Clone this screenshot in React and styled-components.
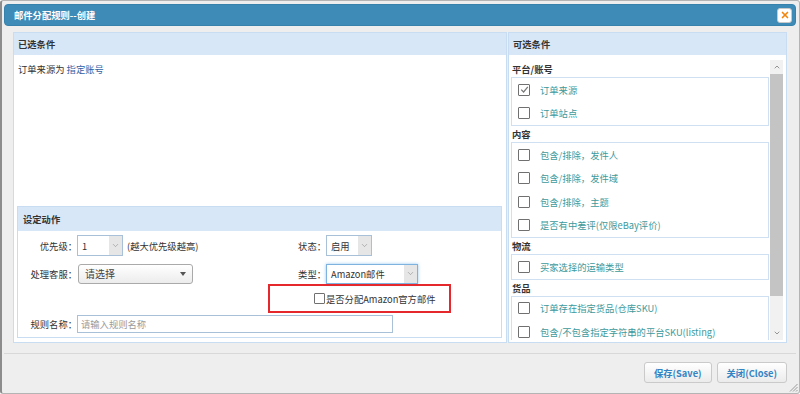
import React from "react";
import styled, { createGlobalStyle } from "styled-components";
import { X, ChevronDown, ChevronUp } from "lucide-react";

const GlobalStyle = createGlobalStyle`
  html, body { margin: 0; padding: 0; background: #fff; }
  body {
    font-family: "Noto Sans CJK SC", "Noto Sans", sans-serif;
    font-size: 9.3px;
    color: #333;
  }
  * { box-sizing: border-box; }
`;

const Dialog = styled.div`
  position: relative;
  width: 800px;
  height: 394px;
  border: 1px solid #b4b4b4;
  border-left: 2px solid #8c8c8c;
  border-radius: 3px;
  background: #eeeeee;
  padding: 3px 3px 0 2px;
  display: flex;
  flex-direction: column;
`;

const TitleBar = styled.div`
  height: 22px;
  flex: none;
  background: #3f8bb8;
  border: 1px solid #3781ad;
  border-radius: 4px;
  display: flex;
  align-items: center;
  justify-content: space-between;
  padding: 0 3px 0 9px;
  color: #fff;
  font-weight: bold;
`;

const CloseButton = styled.div`
  width: 15px;
  height: 15px;
  background: #fff;
  border: 1px solid #c9c9c9;
  border-radius: 3px;
  display: flex;
  align-items: center;
  justify-content: center;
`;

const Content = styled.div`
  margin: 6px 9px 0 9px;
  height: 311px;
  flex: none;
  display: flex;
  gap: 1px;
`;

const Panel = styled.div`
  width: ${(p) => (p.$w ? `${p.$w}px` : "auto")};
  flex: ${(p) => (p.$w ? "none" : "1")};
  border: 1px solid #c9ddf2;
  background: #fff;
  display: flex;
  flex-direction: column;
  min-width: 0;
`;

const PanelHeader = styled.div`
  height: ${(p) => p.$h || 22}px;
  flex: none;
  background: #d8e7f7;
  display: flex;
  align-items: center;
  padding-left: ${(p) => p.$pl || 4}px;
  font-weight: bold;
  color: #333;
`;

const SelectedText = styled.div`
  padding: 7px 4px 0;
  line-height: 14px;
`;

const LinkText = styled.span`
  color: #2d62a6;
`;

const ActionBox = styled.div`
  margin: auto 4px 4px 3px;
  border: 1px solid #c9ddf2;
  display: flex;
  flex-direction: column;
`;

const ActionBody = styled.div`
  padding: 4px 0 4px;
  display: flex;
  flex-direction: column;
`;

const FormRow = styled.div`
  display: flex;
  align-items: center;
  height: ${(p) => p.$h}px;
  margin-top: ${(p) => p.$mt || 0}px;
`;

const Field = styled.div`
  display: flex;
  align-items: center;
  width: ${(p) => (p.$w ? `${p.$w}px` : "auto")};
  flex: none;
`;

const Label = styled.div`
  width: ${(p) => p.$w}px;
  text-align: right;
  white-space: nowrap;
  color: #333;
`;

const Select = styled.div`
  width: ${(p) => p.$w}px;
  height: ${(p) => p.$h || 21}px;
  display: flex;
  align-items: stretch;
  background: #fff;
  border: 1px solid ${(p) => (p.$focus ? "#7fb3df" : "#a9c0d9")};
  box-shadow: ${(p) => (p.$focus ? "0 0 3px rgba(102,175,233,0.7)" : "none")};
`;

const SelectValue = styled.div`
  flex: 1;
  display: flex;
  align-items: center;
  padding-left: 4px;
  color: #333;
  white-space: nowrap;
`;

const SelectArrow = styled.div`
  width: 13px;
  background: #e6e6e6;
  display: flex;
  align-items: center;
  justify-content: center;
`;

const Combo = styled.div`
  margin-left: 1px;
  width: 115px;
  height: 20px;
  border: 1px solid #aaaaaa;
  border-radius: 3px;
  background: linear-gradient(#ffffff, #ececec);
  display: flex;
  align-items: center;
  justify-content: space-between;
  padding: 0 6px 0 6px;
  color: #444;
  font-size: 10px;
`;

const Caret = styled.span`
  width: 0;
  height: 0;
  border-left: 3px solid transparent;
  border-right: 3px solid transparent;
  border-top: 4px solid #555;
`;

const Hint = styled.span`
  margin-left: 4px;
  white-space: nowrap;
`;

const RedBox = styled.div`
  margin-left: 250px;
  width: 183px;
  height: 29px;
  border: 2px solid #e5282b;
  display: flex;
  align-items: center;
  padding-left: 44px;
  gap: 1px;
  white-space: nowrap;
`;

const Box = styled.span`
  width: ${(p) => p.$s || 12}px;
  height: ${(p) => p.$s || 12}px;
  flex: none;
  border: 1px solid #707070;
  background: #fff;
  border-radius: 1px;
  display: inline-flex;
  align-items: center;
  justify-content: center;
`;

const TextInput = styled.input`
  width: 316px;
  height: 18px;
  border: 1px solid #a9c0d9;
  padding: 0 3px;
  font-family: inherit;
  font-size: 9.3px;
  color: #333;
  outline: none;
  &::placeholder { color: #9a9a9a; }
`;

const ScrollWrap = styled.div`
  margin-top: 5px;
  height: 280px;
  display: flex;
`;

const List = styled.div`
  flex: 1;
  overflow: hidden;
  padding: 1px 0 0 2px;
  min-width: 0;
`;

const GroupHeading = styled.div`
  height: 16px;
  display: flex;
  align-items: center;
  padding-left: 1px;
  font-weight: bold;
  color: #333;
`;

const GroupBox = styled.div`
  border: 1px solid #cfe0f3;
`;

const Item = styled.div`
  height: 23.5px;
  display: flex;
  align-items: center;
  padding-left: 6px;
`;

const ItemText = styled.span`
  margin-left: 10px;
  color: #3d9a9c;
  white-space: nowrap;
`;

const Scrollbar = styled.div`
  width: 13px;
  margin: 0 3px 0 1px;
  background: #f1f1f1;
  display: flex;
  flex-direction: column;
`;

const ScrollBtn = styled.div`
  height: 14px;
  flex: none;
  display: flex;
  align-items: center;
  justify-content: center;
`;

const Thumb = styled.div`
  height: 222px;
  flex: none;
  background: #c4c4c4;
`;

const Track = styled.div`
  flex: 1;
`;

const Footer = styled.div`
  margin-top: 10px;
  border-top: 1px solid #d8d8d8;
  display: flex;
  justify-content: flex-end;
  gap: 5px;
  padding: 8px 9px 0 0;
`;

const Button = styled.div`
  height: 21px;
  padding: 0 ${(p) => p.$px || 9}px;
  border: 1px solid #cacaca;
  border-radius: 3px;
  background: linear-gradient(#ffffff, #ebebeb);
  color: #3484c4;
  font-weight: bold;
  display: flex;
  align-items: center;
  white-space: nowrap;
`;

const Grip = styled.svg`
  position: absolute;
  right: 1px;
  bottom: 1px;
`;

const Check = () => (
  <svg width="9" height="9" viewBox="0 0 9 9">
    <polyline points="1.2,4.6 3.6,7 7.8,1.8" fill="none" stroke="#777" strokeWidth="1.2" />
  </svg>
);

const groups = [
  { title: "平台/账号", items: [{ t: "订单来源", c: true }, { t: "订单站点" }] },
  {
    title: "内容",
    items: [
      { t: "包含/排除，发件人" },
      { t: "包含/排除，发件域" },
      { t: "包含/排除，主题" },
      { t: "是否有中差评(仅限eBay评价)" },
    ],
  },
  { title: "物流", items: [{ t: "买家选择的运输类型" }] },
  {
    title: "货品",
    items: [
      { t: "订单存在指定货品(仓库SKU)" },
      { t: "包含/不包含指定字符串的平台SKU(listing)" },
    ],
  },
];

const Arrow = () => (
  <SelectArrow>
    <ChevronDown size={9} strokeWidth={1.4} color="#808080" />
  </SelectArrow>
);

export default function App() {
  return (
    <>
      <GlobalStyle />
      <Dialog>
        <TitleBar>
          <span>邮件分配规则--创建</span>
          <CloseButton>
            <X size={10} strokeWidth={4} color="#f0870f" />
          </CloseButton>
        </TitleBar>

        <Content>
          <Panel $w={494}>
            <PanelHeader>已选条件</PanelHeader>
            <SelectedText>
              订单来源为 <LinkText>指定账号</LinkText>
            </SelectedText>

            <ActionBox>
              <PanelHeader $h={24} $pl={5}>设定动作</PanelHeader>
              <ActionBody>
                <FormRow $h={21} $mt={0}>
                  <Field $w={250}>
                    <Label $w={59}>优先级：</Label>
                    <Select $w={46}>
                      <SelectValue>1</SelectValue>
                      <Arrow />
                    </Select>
                    <Hint>(越大优先级越高)</Hint>
                  </Field>
                  <Field>
                    <Label $w={58}>状态：</Label>
                    <Select $w={46}>
                      <SelectValue>启用</SelectValue>
                      <Arrow />
                    </Select>
                  </Field>
                </FormRow>

                <FormRow $h={21} $mt={7}>
                  <Field $w={250}>
                    <Label $w={59}>处理客服：</Label>
                    <Combo>
                      <span>请选择</span>
                      <Caret />
                    </Combo>
                  </Field>
                  <Field>
                    <Label $w={58}>类型：</Label>
                    <Select $w={92} $h={20} $focus>
                      <SelectValue>Amazon邮件</SelectValue>
                      <Arrow />
                    </Select>
                  </Field>
                </FormRow>

                <FormRow $h={29}>
                  <RedBox>
                    <Box $s={11} />
                    <span>是否分配Amazon官方邮件</span>
                  </RedBox>
                </FormRow>

                <FormRow $h={18} $mt={2}>
                  <Field>
                    <Label $w={59}>规则名称：</Label>
                    <TextInput placeholder="请输入规则名称" />
                  </Field>
                </FormRow>
              </ActionBody>
            </ActionBox>
          </Panel>

          <Panel>
            <PanelHeader>可选条件</PanelHeader>
            <ScrollWrap>
              <List>
                {groups.map((g) => (
                  <React.Fragment key={g.title}>
                    <GroupHeading>{g.title}</GroupHeading>
                    <GroupBox>
                      {g.items.map((it) => (
                        <Item key={it.t}>
                          <Box>{it.c && <Check />}</Box>
                          <ItemText>{it.t}</ItemText>
                        </Item>
                      ))}
                    </GroupBox>
                  </React.Fragment>
                ))}
              </List>
              <Scrollbar>
                <ScrollBtn>
                  <ChevronUp size={8} strokeWidth={2} color="#666" />
                </ScrollBtn>
                <Thumb />
                <Track />
                <ScrollBtn>
                  <ChevronDown size={8} strokeWidth={2} color="#666" />
                </ScrollBtn>
              </Scrollbar>
            </ScrollWrap>
          </Panel>
        </Content>

        <Footer>
          <Button $px={9}>保存(Save)</Button>
          <Button $px={9}>关闭(Close)</Button>
        </Footer>

        <Grip width="9" height="9" viewBox="0 0 9 9">
          <line x1="8.5" y1="1" x2="1" y2="8.5" stroke="#9a9a9a" strokeWidth="1" />
          <line x1="8.5" y1="4" x2="4" y2="8.5" stroke="#9a9a9a" strokeWidth="1" />
          <line x1="8.5" y1="7" x2="7" y2="8.5" stroke="#9a9a9a" strokeWidth="1" />
        </Grip>
      </Dialog>
    </>
  );
}
